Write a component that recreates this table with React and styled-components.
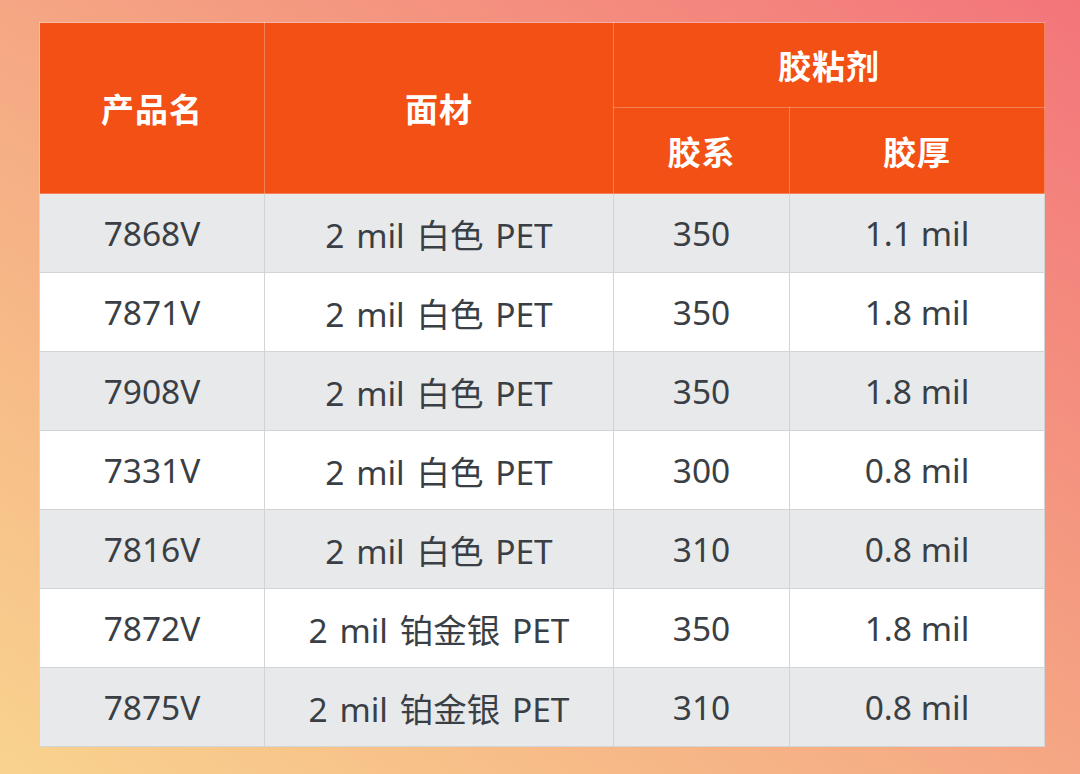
import React from 'react';
import styled, { createGlobalStyle } from 'styled-components';

const GlobalStyle = createGlobalStyle`
  html, body {
    margin: 0;
    padding: 0;
  }
  body {
    font-family: "Noto Sans", "Noto Sans CJK SC", sans-serif;
  }
`;

const Page = styled.div`
  width: 1080px;
  height: 774px;
  box-sizing: border-box;
  padding: 22px 36px 29px 39px;
  background: linear-gradient(to top right, #f9d38e 0%, #f5ab84 45%, #f3757a 100%);
`;

const Table = styled.table`
  width: 1005px;
  border-collapse: collapse;
  table-layout: fixed;
  font-family: "Noto Sans", "Noto Sans CJK SC", sans-serif;
`;

const Head = styled.th`
  background: #f25014;
  color: #ffffff;
  font-family: "Noto Sans CJK SC", sans-serif;
  font-size: 33px;
  font-weight: 700;
  height: ${(p) => p.$h}px;
  padding: 0;
  border: 1px solid rgba(255, 255, 255, 0.28);
  text-align: center;
  vertical-align: middle;
  letter-spacing: 1px;
`;

const Row = styled.tr`
  background: ${(p) => (p.$shade ? '#e8e9eb' : '#ffffff')};
`;

const Cell = styled.td`
  height: 78px;
  padding: 0;
  border: 1px solid #d3d4d6;
  color: #3a3f45;
  font-size: 33.5px;
  font-weight: 400;
  text-align: center;
  vertical-align: middle;
  word-spacing: ${(p) => (p.$wide ? '3px' : '0')};
`;

const rows = [
  ['7868V', '2 mil 白色 PET', '350', '1.1 mil'],
  ['7871V', '2 mil 白色 PET', '350', '1.8 mil'],
  ['7908V', '2 mil 白色 PET', '350', '1.8 mil'],
  ['7331V', '2 mil 白色 PET', '300', '0.8 mil'],
  ['7816V', '2 mil 白色 PET', '310', '0.8 mil'],
  ['7872V', '2 mil 铂金银 PET', '350', '1.8 mil'],
  ['7875V', '2 mil 铂金银 PET', '310', '0.8 mil'],
];

const App = () => {
  return (
    <>
      <GlobalStyle />
      <Page>
        <Table>
          <colgroup>
            <col style={{ width: 225 }} />
            <col style={{ width: 349 }} />
            <col style={{ width: 176 }} />
            <col style={{ width: 255 }} />
          </colgroup>
          <thead>
            <tr>
              <Head rowSpan={2} $h={84}>产品名</Head>
              <Head rowSpan={2} $h={84}>面材</Head>
              <Head colSpan={2} $h={84}>胶粘剂</Head>
            </tr>
            <tr>
              <Head $h={85}>胶系</Head>
              <Head $h={85}>胶厚</Head>
            </tr>
          </thead>
          <tbody>
            {rows.map((r, i) => (
              <Row key={r[0]} $shade={i % 2 === 0}>
                {r.map((v, j) => (
                  <Cell key={j} $wide={j === 1}>{v}</Cell>
                ))}
              </Row>
            ))}
          </tbody>
        </Table>
      </Page>
    </>
  );
};

export default App;
